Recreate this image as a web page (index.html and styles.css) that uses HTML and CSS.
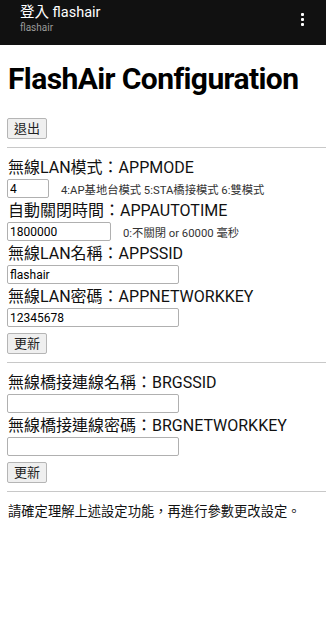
FILE: index.html
```html
<!DOCTYPE html>
<html lang="zh-Hant">
<head>
<meta charset="utf-8">
<meta name="viewport" content="width=device-width, initial-scale=1">
<title>FlashAir Configuration</title>
<link rel="stylesheet" href="styles.css">
</head>
<body>
<header class="appbar">
  <div class="appbar-titles">
    <div class="appbar-title">登入 flashair</div>
    <div class="appbar-sub">flashair</div>
  </div>
  <div class="kebab" aria-label="menu"><span></span><span></span><span></span></div>
</header>
<main class="page">
  <h1 class="title">FlashAir Configuration</h1>
  <div class="logout"><button class="btn" type="button">退出</button></div>
  <hr class="rule">
  <section class="group">
    <div class="label">無線LAN模式：APPMODE</div>
    <div class="row"><input class="in in-xs" type="text" value="4"><span class="hint">4:AP基地台模式 5:STA橋接模式 6:雙模式</span></div>
    <div class="label">自動關閉時間：APPAUTOTIME</div>
    <div class="row"><input class="in in-sm" type="text" value="1800000"><span class="hint">0:不關閉 or 60000 毫秒</span></div>
    <div class="label">無線LAN名稱：APPSSID</div>
    <div class="row"><input class="in" type="text" value="flashair"></div>
    <div class="label">無線LAN密碼：APPNETWORKKEY</div>
    <div class="row"><input class="in" type="text" value="12345678"></div>
    <div class="actions"><button class="btn" type="button">更新</button></div>
  </section>
  <hr class="rule">
  <section class="group">
    <div class="label">無線橋接連線名稱：BRGSSID</div>
    <div class="row"><input class="in" type="text" value=""></div>
    <div class="label">無線橋接連線密碼：BRGNETWORKKEY</div>
    <div class="row"><input class="in" type="text" value=""></div>
    <div class="actions"><button class="btn" type="button">更新</button></div>
  </section>
  <hr class="rule">
  <p class="notice">請確定理解上述設定功能，再進行參數更改設定。</p>
</main>
</body>
</html>
```

FILE: styles.css
```css
html, body {
  margin: 0;
  padding: 0;
  background: #fff;
}
body {
  font-family: Roboto, "Noto Sans CJK TC", sans-serif;
  color: #000;
}
.appbar {
  height: 45px;
  background: #111;
  display: flex;
  align-items: flex-start;
  justify-content: space-between;
  padding: 0 22px 0 20px;
  box-sizing: border-box;
}
.appbar-titles {
  display: flex;
  flex-direction: column;
  padding-top: 4px;
}
.appbar-title {
  color: #fff;
  font-size: 14.5px;
  line-height: 17px;
}
.appbar-sub {
  color: #9a9a9a;
  font-size: 10px;
  line-height: 13px;
}
.kebab {
  display: flex;
  flex-direction: column;
  gap: 2px;
  padding-top: 13px;
}
.kebab span {
  width: 3px;
  height: 3px;
  background: #fff;
  border-radius: 1px;
}
.page {
  padding: 0 0 0 7px;
}
.title {
  font-size: 30px;
  line-height: 36px;
  font-weight: 700;
  letter-spacing: -0.6px;
  white-space: nowrap;
  margin: 16px 0 21px 1px;
}
.logout {
  margin-bottom: 8px;
}
.btn {
  height: 21px;
  padding: 0 6px;
  font-family: Roboto, "Noto Sans CJK TC", sans-serif;
  font-size: 13px;
  line-height: 19px;
  background: #efefef;
  border: 1px solid #b5b5b5;
  border-radius: 2px;
  color: #222;
  margin: 0;
}
.rule {
  margin: 0;
  border: 0;
  border-top: 1px solid #c8c8c8;
}
.group {
  padding-top: 10px;
}
.label {
  font-size: 16px;
  line-height: 20px;
  margin-top: 3px;
  padding-left: 1px;
  color: #111;
}
.group .label:first-child {
  margin-top: 0;
}
.row {
  display: flex;
  align-items: center;
  margin-top: 1px;
}
.in {
  box-sizing: border-box;
  width: 172px;
  height: 19px;
  margin: 0;
  padding: 0 2px;
  border: 1px solid #b0b0b0;
  border-radius: 2px;
  font-family: Roboto, "Noto Sans CJK TC", sans-serif;
  font-size: 12px;
  color: #000;
  background: #fff;
}
.in-xs {
  width: 42px;
}
.in-sm {
  width: 104px;
}
.hint {
  margin-left: 12px;
  font-size: 11.3px;
  color: #333;
}
.actions {
  margin-top: 6px;
  margin-bottom: 8px;
}
.notice {
  margin: 11px 0 0 1px;
  font-size: 13.3px;
  line-height: 18px;
  color: #111;
}
```
